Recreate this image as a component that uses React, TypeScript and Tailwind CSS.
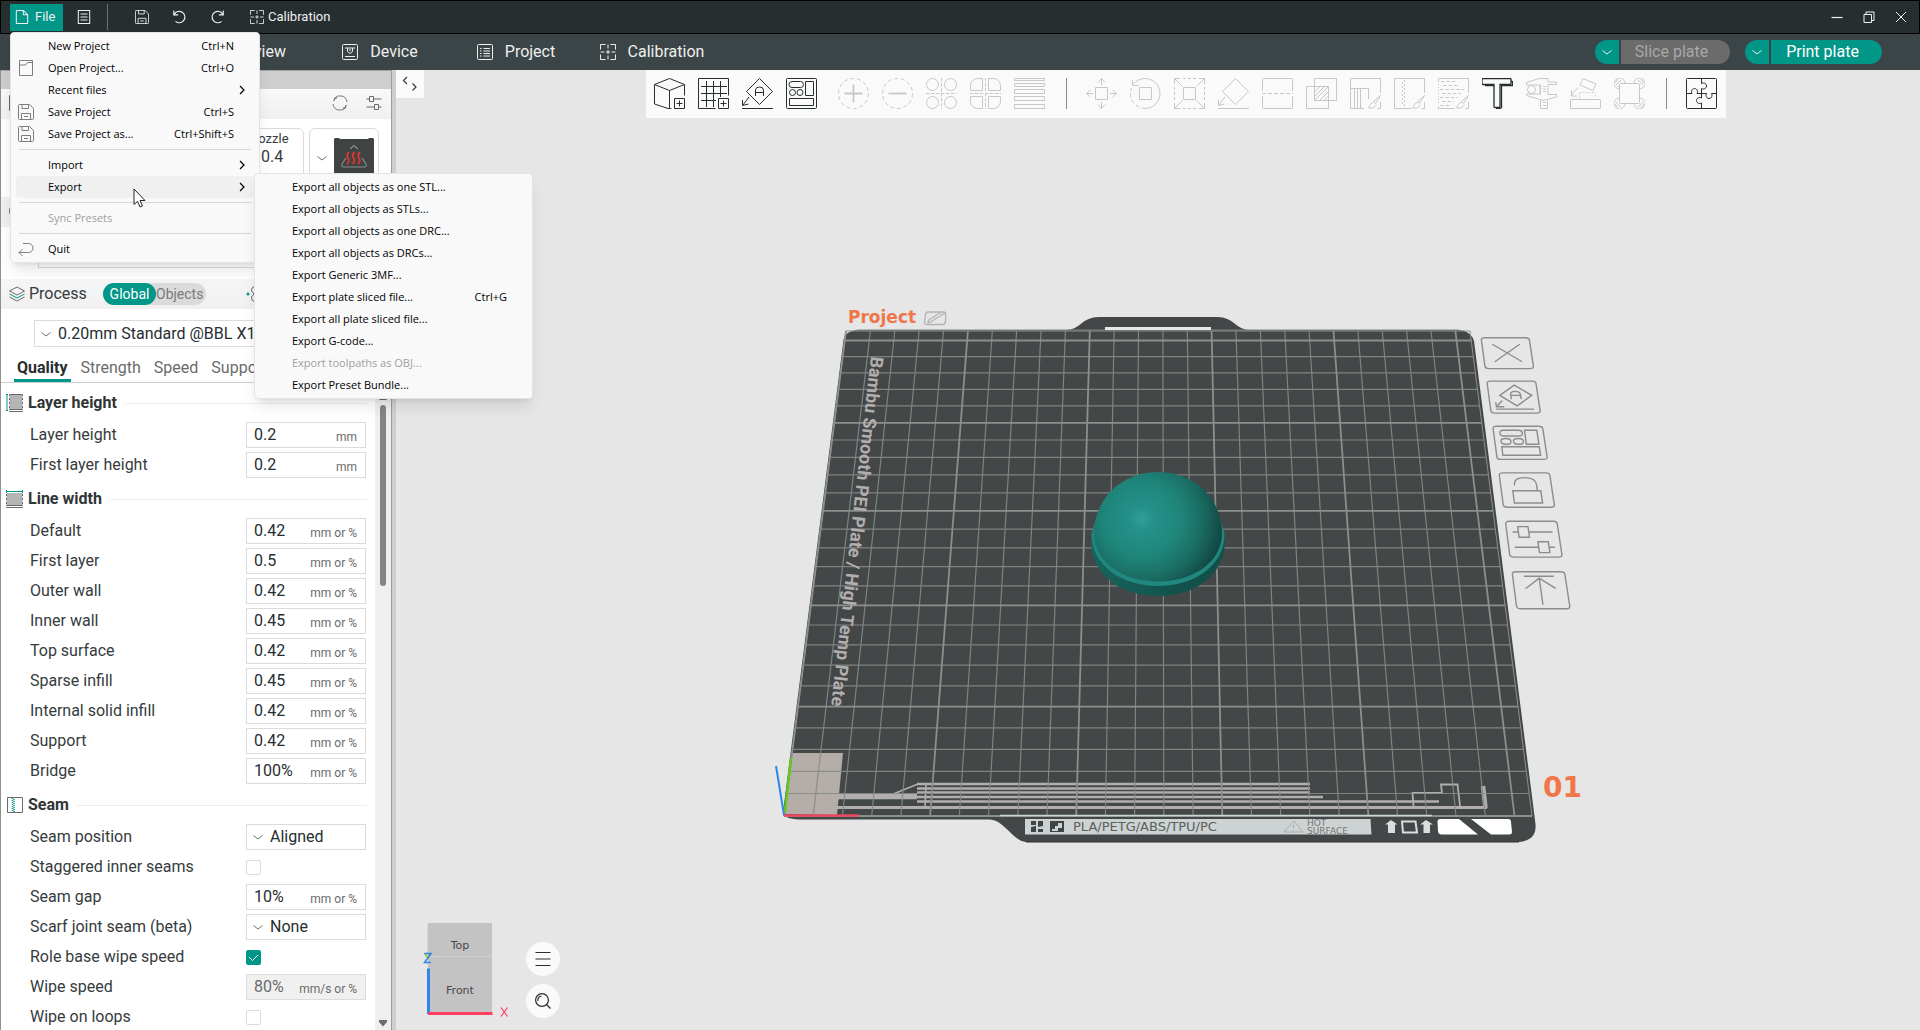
import React from "react";

type Kids = { children?: React.ReactNode };

/* ---------- plate projection ---------- */

const PLATE = 256;

function project(u: number, v: number): [number, number] {
  const w0 = 748;
  const w1 = 624;
  const w = 1 / (1 / w0 + (v / PLATE) * (1 / w1 - 1 / w0));
  const x = 1158 + ((u - PLATE / 2) / PLATE) * w;
  const y = 816 - ((w0 - w) * 485) / (w0 - w1);
  return [x, y];
}

function point(u: number, v: number): string {
  const [x, y] = project(u, v);
  return x.toFixed(1) + " " + y.toFixed(1);
}

/* Projects a path drawn in a 20x20 box whose top-left corner lies at (u, v) on the plate plane. */
function onPlane(d: string, u: number, v: number): string {
  return d.replace(/(-?[\d.]+),(-?[\d.]+)/g, (_m, a, b) =>
    point(u + Number(a) * 0.98, v - Number(b) * 0.96)
  );
}

const FRAME =
  "M1.5,0 L18.5,0 Q20,0 20,1.5 L20,18.5 Q20,20 18.5,20 L1.5,20 Q0,20 0,18.5 L0,1.5 Q0,0 1.5,0Z";

const PLATE_ACTIONS: string[] = [
  "M4.5,4.5 L15.5,15.5 M15.5,4.5 L4.5,15.5",
  "M11,2.5 L17.5,9 L11,15.5 L4.5,9Z M2.5,17.5 L17.5,17.5 M5,12.5 L2.5,16 M2.5,13.5 L2.5,16 L5.5,16 M9,11 L9,8.5 Q9,6.5 11,6.5 Q13,6.5 13,8.5 L13,11 M9,9 L13,9",
  "M4,2.5 L10,2.5 Q11.5,2.5 11.5,4.2 Q11.5,6 10,6 L4,6 Q2.5,6 2.5,4.2 Q2.5,2.5 4,2.5Z M12.5,2.5 L17.5,2.5 L17.5,11 L12.5,11Z M4.5,7.5 Q6.5,7.5 6.5,9.2 Q6.5,11 4.5,11 Q2.5,11 2.5,9.2 Q2.5,7.5 4.5,7.5Z M9.5,7.5 Q11.5,7.5 11.5,9.2 Q11.5,11 9.5,11 Q7.5,11 7.5,9.2 Q7.5,7.5 9.5,7.5Z M2.5,12.5 L17.5,12.5 L17.5,17.5 L2.5,17.5Z",
  "M4.5,10.5 L15.5,10.5 L15.5,17.5 L4.5,17.5Z M5.5,7 Q5.5,2.8 10,2.8 Q14.2,2.8 14.2,7 L14.2,10.5",
  "M2.5,6 L4.5,6 M8.5,6 L17.5,6 M4.5,3 L8.5,3 L8.5,9 L4.5,9Z M2.5,14.5 L11.5,14.5 M15.5,14.5 L17.5,14.5 M11.5,11.5 L15.5,11.5 L15.5,17.5 L11.5,17.5Z",
  "M4.5,2.5 L15.5,2.5 M10,3.5 L10,17.5 M4.5,9 L10,3.5 L15.5,9",
];

function Plate() {
  const minor: string[] = [];
  const major: string[] = [];
  for (let i = 0; i <= 25; i++) {
    const across = "M" + point(0, i * 10) + "L" + point(PLATE, i * 10);
    const along = "M" + point(i * 10, 0) + "L" + point(i * 10, PLATE);
    (i % 5 === 0 ? major : minor).push(across, along);
  }
  const rim =
    "M" + point(0, 0) + "L" + point(PLATE, 0) + "L" + point(PLATE, PLATE) + "L" + point(0, PLATE) + "Z";
  return (
    <svg
      className="absolute inset-0 size-full"
      viewBox="396 70 1524 960"
      preserveAspectRatio="xMidYMid meet"
      fill="none"
      role="img"
      aria-label="Build plate with a dome model"
    >
      <defs>
        <radialGradient id="dome" gradientUnits="userSpaceOnUse" cx="1142" cy="519" r="92">
          <stop offset="0" stopColor="#31a095" />
          <stop offset="0.14" stopColor="#23918a" />
          <stop offset="0.42" stopColor="#1f857a" />
          <stop offset="0.66" stopColor="#1a6b62" />
          <stop offset="0.88" stopColor="#124843" />
        </radialGradient>
        <linearGradient id="skirt" x1="0" x2="1" y1="0" y2="0">
          <stop offset="0" stopColor="#17655d" />
          <stop offset="0.7" stopColor="#12504a" />
          <stop offset="1" stopColor="#154f49" />
        </linearGradient>
      </defs>

      <path
        d="M857 330H1066C1080 330 1082 317 1099 317H1217C1234 317 1236 330 1250 330H1459Q1471 331 1474 341L1535.500 824Q1537 840 1519 842H1026C1014 842 1004 820 990 819.500H799Q784 819 783 812L843.500 340Q845 331 857 330Z"
        fill="#444747"
      />
      <path d="M1026 842H1519" stroke="#2f3333" />
      <path d="M857 330H1459" stroke="#7d8484" />
      <path d="M1105 328.500H1211" stroke="#e8e8e8" strokeWidth="3" />
      <path d="M784 814L791 753H843L837 815Z" fill="#b5aea8" />

      <g stroke="#b2aeae">
        <path d="M917 784H1310M917 788.500H1310M917 792.500H1310M917 797H1323M917 801.500H1439" strokeWidth="2.500" />
        <path d="M838 796.500H917" strokeWidth="5.500" />
        <path d="M837 807.500H1487" strokeWidth="2.800" />
        <path d="M892 794.500L918 784M926 784L925 807" strokeWidth="1.600" />
        <path d="M1413.500 806L1412.500 793H1442L1441 784.500H1457.500L1460 806" strokeWidth="1.800" />
        <path d="M1483 786L1485.500 808" strokeWidth="4.500" />
      </g>

      <path d={minor.join("")} stroke="#858b86" strokeWidth="1.200" opacity="0.9" />
      <path d={major.join("")} stroke="#8a908a" strokeWidth="1.800" />
      <path d={rim} stroke="#8b918c" strokeWidth="1" />
      <path d="M1000 815.500H1432" stroke="#cdd4d4" strokeWidth="1.500" />

      <text
        x="871"
        y="356"
        transform="rotate(96.500 871 356)"
        fill="#b2aeae"
        fontSize="18"
        fontFamily="Roboto, sans-serif"
        fontWeight="700"
      >
        Bambu Smooth PEI Plate / High Temp Plate
      </text>

      <path d="M784 815L776 766" stroke="#2f86ea" strokeWidth="2" />
      <path d="M785 812L791 758" stroke="#62c91c" strokeWidth="2.500" />
      <path d="M784 815.500H859" stroke="#ea4860" strokeWidth="2.500" />

      <path d="M1025 819H1370.500L1371.500 834.500H1025Z" fill="#cdd2d2" />
      <g fill="#3f4545">
        <path d="M1031 821h5v4h-5zM1038 821h5v5l-5 1zM1031 827l5-1v6h-5zM1038 829h5v3h-5z" />
        <path d="M1050 821h14v11h-14zM1058 823v3h-3v3h-3v2h6v-3h4v-5z" fillRule="evenodd" />
      </g>
      <text x="1073" y="831" fill="#596060" fontSize="13" fontFamily="'DejaVu Sans', sans-serif">
        PLA/PETG/ABS/TPU/PC
      </text>
      <path d="M1284 832L1294 821L1303 832ZM1293.500 825v3M1293.500 829.500v1" stroke="#a9aeae" />
      <text fill="#737979" fontSize="9" fontFamily="'DejaVu Sans', sans-serif">
        <tspan x="1307" y="826">HOT</tspan>
        <tspan x="1307" y="834">SURFACE</tspan>
      </text>
      <path d="M1385 824.500L1391 820L1397.500 824.500H1395V833H1388V824.500ZM1420 824.500L1426 820L1433 824.500H1430V833H1423.500V824.500Z" fill="#d9dddd" />
      <path d="M1402 821.500H1415.500L1417 832.500H1403Z" stroke="#d9dddd" strokeWidth="2" />
      <path d="M1440 819H1459L1478 834.500H1441Q1438 834 1438 831L1437.500 821Q1438 819 1440 819ZM1471 819H1508Q1511 819 1511 822L1512 832Q1512 834.500 1509 834.500H1491Z" fill="#fff" />

      <path d="M1091.500 534V549C1096 577 1122 596 1158 596C1194 596 1220 577 1224.500 549V534Z" fill="url(#skirt)" />
      <path d="M1091.500 534C1091.500 565 1121 586 1158 586C1195 586 1224.500 565 1224.500 534L1219 515H1097Z" fill="#20887e" />
      <path d="M1094 534C1094 498 1122 472 1158 472C1194 472 1222 498 1222 534C1222 561 1194 581.500 1158 581.500C1122 581.500 1094 561 1094 534Z" fill="url(#dome)" />

      <text x="848" y="323" fill="#f0764a" fontSize="17" fontWeight="700" fontFamily="'DejaVu Sans', sans-serif">
        Project
      </text>
      <path d="M928 312H943.500Q946 312 945.800 314.500L945.500 322Q945 324.500 942.500 324.500H927Q924 324.500 924.500 322L925.500 314.500Q926 312 928 312ZM929.500 322.500L945 313M928.500 320L941.500 312M928.500 320L928 322.500H929.500" stroke="#b3b3b3" strokeWidth="1.300" />
      <text x="1543" y="797" fill="#f0764a" fontSize="28" fontWeight="700" fontFamily="'DejaVu Sans', sans-serif">
        01
      </text>

      {PLATE_ACTIONS.map((d, i) => (
        <path
          key={i}
          d={onPlane(FRAME + d, 260.2, 251.8 - i * 26.88)}
          stroke="#8c8c8c"
          strokeWidth="1.400"
          strokeLinecap="round"
        />
      ))}
    </svg>
  );
}

/* ---------- icons ---------- */

function Ico({ size = "size-4", box = 16, label, children }: Kids & { size?: string; box?: number; label?: string }) {
  return (
    <svg
      className={"shrink-0 " + size}
      viewBox={"0 0 " + box + " " + box}
      fill="none"
      stroke="currentColor"
      aria-hidden={label ? undefined : true}
      aria-label={label}
    >
      {children}
    </svg>
  );
}

const SavePath = () => (
  <path d="M.5 1.500a1 1 0 0 1 1-1h10l4 4v10a1 1 0 0 1-1 1h-13a1 1 0 0 1-1-1zM4 .5v4h6.500v-4M3.500 15.500v-6h9v6M6 12.500h4" />
);
const CrossFrame = () => (
  <path d="M.5 5.500v-5h5M10.500.5h5v5M15.500 10.500v5h-5M5.500 15.500h-5v-5M8 .5v4M8 11.500v4M.5 8h4M11.500 8h4M6 8h4M8 6v4" />
);
const Chevron = ({ size = "size-3" }: { size?: string }) => (
  <Ico size={size} box={12}>
    <path d="M1.500 4.500L6 8l4.500-3.500" />
  </Ico>
);
const ChevronRight = () => (
  <Ico size="size-3" box={12}>
    <path d="M4 2l4 4-4 4" strokeWidth="1.200" />
  </Ico>
);
const Sliders = () => (
  <path d="M.5 4h3M7.500 4h8M3.500 1.500h4v5h-4zM.5 12h8M12.500 12h3M8.500 9.500h4v5h-4z" />
);

const brush = "M30.500 17.500l-7 6 2 2zM23.500 24.500c-3 0-3 3-5 5.500 3 .5 7 0 7.500-3.500";

type Tool = { name: string; dark?: boolean; d?: string; extra?: React.ReactNode };

const TOOLS: Tool[] = [
  { name: "Add", dark: true, d: "M15.500 31L.5 26V6.500L15.500.5l15 6v11M.5 6.500l15 6 15-6M15.500 12.500V31l2-.5M20.500 20.500h10v10h-10zM25.500 22.500v6M22.500 25.500h6" },
  { name: "Add plate", dark: true, d: "M17.500 30.500H.5V.5h30v17M20.500 20.500h10v10h-10zM25.500 22.500v6M22.500 25.500h6M8.500 3v26M15.500 3v26M22.500 3v16M3 8.500h26M3 15.500h26M3 22.500h15" },
  { name: "Auto orient", dark: true, d: "M17.500.5l13 13-13 13-13-13zM0 30.500h31M7 19l-6 8M.5 22v5.500l6-1.500M13.500 18v-6q0-3 4-3t4 3v6M13.500 14.500h8" },
  { name: "Arrange", dark: true, d: "M1.500.5h28a1 1 0 0 1 1 1v28a1 1 0 0 1-1 1h-28a1 1 0 0 1-1-1v-28a1 1 0 0 1 1-1zM6 3.500h8.500a3 3 0 0 1 0 6H6a3 3 0 0 1 0-6zM19.500 3.500h8v14h-8zM3.500 20.500h24v7h-24zM9.500 14.500a3 3 0 1 1-6 0 3 3 0 0 1 6 0zM17 14.500a3 3 0 1 1-6 0 3 3 0 0 1 6 0z" },
  { name: "Add instance", extra: <><circle cx="15.500" cy="15.500" r="15" strokeDasharray="4 2.700" /><path d="M15.500 6.500v18M6.500 15.500h18" strokeWidth="1.800" /></> },
  { name: "Remove instance", extra: <><circle cx="15.500" cy="15.500" r="15" strokeDasharray="4 2.700" /><path d="M6.500 15.500h18" strokeWidth="1.800" /></> },
  { name: "Split to objects", extra: <><circle cx="6.500" cy="6.500" r="6" /><circle cx="24.500" cy="6.500" r="6" /><circle cx="6.500" cy="24.500" r="6" /><circle cx="24.500" cy="24.500" r="6" /><path d="M15.500 0v31M0 15.500h31" strokeDasharray="3.500 1.500" /></> },
  { name: "Split to parts", extra: <><path d="M12.500.5v12H.5v-5a7 7 0 0 1 7-7zM18.500.5v12h12v-5a7 7 0 0 0-7-7zM12.500 30.500v-12H.5v5a7 7 0 0 0 7 7zM18.500 30.500v-12h12v5a7 7 0 0 1-7 7z" /><path d="M15.500 0v31M0 15.500h31" strokeDasharray="3.500 1.500" /></> },
  { name: "Variable layer height", d: "M.5.5h30v2H.5zM.5 5.500h30v3H.5zM.5 11.500h30v4H.5zM.5 18.500h30v4H.5zM.5 26.500h30v4H.5z" },
  { name: "|" },
  { name: "Move", d: "M9.500 9.500h12v12h-12zM15.500 7V1M12 4.500l3.500-4 3.500 4M15.500 24v6M12 26.500l3.500 4 3.500-4M7 15.500H1M4.500 12l-4 3.500 4 3.500M24 15.500h6M26.500 12l4 3.500-4 3.500" },
  { name: "Rotate", extra: <><path d="M9.500 9.500h12v12h-12zM3 6.500A15 15 0 1 1 15.500 30.500M2.500 1.500v6h6" /><path d="M15.500 30.500A15 15 0 0 1 1.500 10" strokeDasharray="4 2.500" /></> },
  { name: "Scale", extra: <><path d="M9.500 9.500h12v12h-12zM8.500 8.500L1 1M22.500 8.500L30 1M8.500 22.500L1 30M22.500 22.500L30 30M.5 6V.5H6M25 .5h5.500V6M30.500 25v5.500H25M6 30.500H.5V25" /><path d="M9 .5h13M9 30.500h13M.5 9v13M30.500 9v13" strokeDasharray="3 2" /></> },
  { name: "Lay on face", d: "M17.500.5l13 13-13 13-13-13zM0 30.500h31M7 19l-6 8M.5 22v5.500l6-1.500" },
  { name: "Cut", extra: <><path d="M.5 13V1.500a1 1 0 0 1 1-1h28a1 1 0 0 1 1 1V13M.5 18v11.500a1 1 0 0 0 1 1h28a1 1 0 0 0 1-1V18" /><path d="M0 15.500h31" strokeDasharray="4 2" /></> },
  { name: "Mesh boolean", d: "M9.500.5h21v22h-22v-22zM.5 8.500h22v22H.5zM8.500 14l5.500-5.500M8.500 18.500l10-10M9 22l13-13M13.500 22.500l9-9M18 22.500l4.500-4.500" },
  { name: "Paint supports", d: "M.5 30.500V.5h30V15M.5 10.500h18V21M4.500 10.500v20M7.500 10.500v20M10.500 10.500v20M0 30.500h14M30.500 24v6.500h-3" + brush },
  { name: "Paint seam", extra: <><path d={"M17 30.500H.5V.5h30V15M30.500 24v6.500h-3" + brush} /><path d="M10.500 2v27M8.500 4v24" strokeDasharray="2 2" /></> },
  { name: "Paint fuzzy skin", extra: <><path d={"M.5 3V.5h30V15M30.500 24v6.500h-3M.5 28v2.500h16" + brush} /><path d="M.5 3v24" strokeDasharray="1 2" /><path d="M3 3.500h14M5 7.500h16M2 11.500h24M4 15.500h19M2 19.500h18M4 23.500h12M2 27.500h10" strokeDasharray="3.500 2" /></> },
  { name: "Text shape", dark: true, extra: <><path d="M1 .5h27q1 0 1 1v4q0 1-1 1H18v22q0 1-1 1h-4q-1 0-1-1v-22H1q-1 0-1-1v-4q0-1 1-1z" strokeWidth="1.300" /><path d="M3 7.500h9M29 3l1.500.5v4H19.500v22l-1.500 1h-4" strokeWidth="1.300" /></> },
  { name: "Measure", d: "M.5 4.500L13 .5h9v3.500h8.500v2.500H22v10h8.500v2.500L17 22.500 .5 17.500v-1.500H14v-9H.5zM9.500 11.500a4 4 0 1 1-8 0 4 4 0 0 1 8 0zM14.500 22.500v8h7v-8M14.500 6.500v10M17 8.500h3M17 11h3M17 13.500h3M17 24.500h3M17 27.500h3" },
  { name: "Assembly", extra: <><path d="M1 21.500h29q.5 0 .5.500v8q0 .5-.5.500H1q-.5 0-.5-.500v-8q0-.500.5-.500zM13 .5l13 5.500-3 6.500-13-5.500zM8 9.500l-7 8M1.500 12v6h5.500" /><path d="M9.500 20v-5.500h16V20" strokeDasharray="1.500 1.500" /></> },
  { name: "Brim ears", d: "M6.500 5.500h18q1 0 1 1v18q0 1-1 1h-18q-1 0-1-1v-18q0-1 1-1zM5.500 11A5.500 5.500 0 1 1 11 5.500M20 5.500A5.500 5.500 0 1 1 25.500 11M25.500 20A5.500 5.500 0 1 1 20 25.500M11 25.500A5.500 5.500 0 1 1 5.500 20M2 7l5-5M4 9l1.500-1.500M29 7l-5-5M2 24l5 5M29 24l-5 5M1 5l3-3.500M30 5l-3-3.500M1 26l3 3.500M30 26l-3 3.500" },
  { name: "|" },
  { name: "Assembly view", dark: true, d: "M1.500.5h28a1 1 0 0 1 1 1v28a1 1 0 0 1-1 1h-28a1 1 0 0 1-1-1v-28a1 1 0 0 1 1-1zM15.500.5V5.500c1.500-1 5-.5 5 2.500s-3.500 3.500-5 2.500v9.500c-1.500-1-5-.5-5 2.500s3.500 3.500 5 2.500v5.500M.5 15.500H6c-1-1.500-.5-5 2.500-5s3.500 3.500 2.500 5h9.500c-1 1.500-.5 5 2.500 5s3.500-3.500 2.500-5h5" },
];

/* ---------- chrome ---------- */

function TitleBar() {
  return (
    <header className="flex h-[34px] shrink-0 items-center border border-black bg-[#262e30] pr-3 text-[13px] text-[#efefef]">
      <button className="ml-[9px] flex h-[27px] w-[53px] items-center gap-1.5 bg-[#009688] pl-[5px]">
        <Ico size="size-3.5">
          <path d="M1.500 1.500a1 1 0 0 1 1-1h7l5 5v9a1 1 0 0 1-1 1h-11a1 1 0 0 1-1-1zM9.500.5v5h5" strokeWidth="1.200" />
        </Ico>
        File
      </button>
      <button className="ml-3.5" aria-label="Recent list">
        <Ico size="size-3.5"><path d="M1.500.5h13v15h-13zM4 4.500h8M4 8h8M4 11.500h8" strokeWidth="1.200" /></Ico>
      </button>
      <span className="ml-4 h-[26px] w-px bg-[#6b7376]" />
      <button className="ml-[27px]" aria-label="Save"><Ico size="size-3.5"><SavePath /></Ico></button>
      <button className="ml-[23px]" aria-label="Undo">
        <Ico size="size-3.5"><path d="M2 .5v5h5M2.500 5A6.500 6.500 0 1 1 4 13" strokeWidth="1.300" /></Ico>
      </button>
      <button className="ml-[25px]" aria-label="Redo">
        <Ico size="size-3.5"><path d="M14 .5v5H9M13.500 5A6.500 6.500 0 1 0 12 13" strokeWidth="1.300" /></Ico>
      </button>
      <button className="ml-[25px] flex items-center gap-1">
        <Ico size="size-3.5"><CrossFrame /></Ico>
        Calibration
      </button>
      <div className="ml-auto flex items-center gap-5">
        <button aria-label="Minimize"><Ico size="size-3" box={12}><path d="M.5 6.500h11" strokeWidth="1.200" /></Ico></button>
        <button aria-label="Restore"><Ico size="size-3" box={12}><path d="M1 3.500h7.500v8H1zM3 3V1h8v8.500H9" /></Ico></button>
        <button aria-label="Close"><Ico size="size-3" box={12}><path d="M1 1l10 10M11 1L1 11" /></Ico></button>
      </div>
    </header>
  );
}

function Tab({ icon, children }: Kids & { icon: React.ReactNode }) {
  return (
    <button className="flex h-full w-[136px] items-center justify-center gap-3">
      {icon}
      {children}
    </button>
  );
}

function TabBar() {
  return (
    <nav className="flex h-9 shrink-0 items-center bg-[#3b4446] pl-44 pr-[38px] text-base text-[#efefef]">
      <Tab icon={<Ico><path d="M1 1h14v14H1z" /></Ico>}>Preview</Tab>
      <Tab icon={<Ico><path d="M1.500.5h13a1 1 0 0 1 1 1v13a1 1 0 0 1-1 1h-13a1 1 0 0 1-1-1v-13a1 1 0 0 1 1-1zM3 4h10M5.500 4v3.500l2.500 2 2.500-2V4M8 5v2M3 12.500h10" /></Ico>}>Device</Tab>
      <Tab icon={<Ico><path d="M1.500.5h13a1 1 0 0 1 1 1v13a1 1 0 0 1-1 1h-13a1 1 0 0 1-1-1v-13a1 1 0 0 1 1-1zM3 4.500h1.500M3 7h1.500M3 9.500h1.500M3 12h1.500M6.500 4.500H13M6.500 7H13M6.500 9.500H13M6.500 12H13" /></Ico>}>Project</Tab>
      <Tab icon={<Ico><CrossFrame /></Ico>}>Calibration</Tab>
      <div className="ml-auto flex gap-[15px]">
        <div className="flex h-6 gap-0.5">
          <button aria-label="Slice options" className="flex w-6 items-center justify-center rounded-l-full bg-[#009688]"><Chevron /></button>
          <button disabled className="w-[109px] rounded-r-full bg-[#6b6b6b] pr-2 text-[#a8a8a8]">Slice plate</button>
        </div>
        <div className="flex h-6 gap-0.5">
          <button aria-label="Print options" className="flex w-6 items-center justify-center rounded-l-full bg-[#009688]"><Chevron /></button>
          <button className="w-[111px] rounded-r-full bg-[#009688] pr-2 text-white">Print plate</button>
        </div>
      </div>
    </nav>
  );
}

/* ---------- sidebar ---------- */

function SectionTitle({ icon, children }: Kids & { icon: React.ReactNode }) {
  return (
    <div className="flex h-9 items-center gap-1 pl-[5px] pr-2 pt-0.5">
      {icon}
      <h2 className="pr-1 text-base font-bold text-[#303536]">{children}</h2>
      <span className="h-px flex-1 bg-[#eeeeee]" />
    </div>
  );
}

function Row({ id, label, children }: Kids & { id: string; label: string }) {
  return (
    <div className="flex h-[30px] items-center pl-[29px] pr-[9px]">
      <label htmlFor={id} className="flex-1 text-[#363b3d]">{label}</label>
      <div className="flex w-[120px]">{children}</div>
    </div>
  );
}

function NumberRow({ id, label, value, unit, disabled }: { id: string; label: string; value: string; unit: string; disabled?: boolean }) {
  return (
    <Row id={id} label={label}>
      <div className={"flex h-[26px] w-full items-center border border-[#dbdbdb] pl-[7px] pr-2 " + (disabled ? "bg-[#f0f0f0] text-[#6b6b6b]" : "text-[#262e30]")}>
        <input id={id} defaultValue={value} disabled={disabled} className="w-0 flex-1 bg-transparent outline-none" />
        <span className="pt-1 text-xs text-[#6b6b6b]">{unit}</span>
      </div>
    </Row>
  );
}

function SelectRow({ id, label, value }: { id: string; label: string; value: string }) {
  return (
    <Row id={id} label={label}>
      <div className="flex h-[26px] w-full items-center gap-1.5 border border-[#dbdbdb] pl-[5px] text-[#262e30]">
        <span className="text-[#6b6b6b]"><Chevron /></span>
        <select id={id} className="flex-1 appearance-none bg-transparent outline-none">
          <option>{value}</option>
        </select>
      </div>
    </Row>
  );
}

function CheckRow({ id, label, checked }: { id: string; label: string; checked?: boolean }) {
  return (
    <Row id={id} label={label}>
      <span className="grid">
        <input
          id={id}
          type="checkbox"
          defaultChecked={checked}
          className="col-start-1 row-start-1 size-[15px] appearance-none rounded-xs border border-[#dbdbdb] checked:border-[#009688] checked:bg-[#009688]"
        />
        {checked && (
          <svg className="pointer-events-none col-start-1 row-start-1 size-[15px]" viewBox="0 0 15 15" fill="none" stroke="#fff">
            <path d="M3 7l3.500 3.500L12 5" />
          </svg>
        )}
      </span>
    </Row>
  );
}

const LINE_WIDTHS: [string, string][] = [
  ["Default", "0.42"],
  ["First layer", "0.5"],
  ["Outer wall", "0.42"],
  ["Inner wall", "0.45"],
  ["Top surface", "0.42"],
  ["Sparse infill", "0.45"],
  ["Internal solid infill", "0.42"],
  ["Support", "0.42"],
  ["Bridge", "100%"],
];

const Stack = () => (
  <path d="M3.500 4h13v2h-13zM3.500 8h13v2h-13zM3.500 12h13v2h-13zM3 15.500h14M3 17.500h14" stroke="#6b6b6b" />
);

function Sidebar() {
  return (
    <aside className="flex w-[396px] shrink-0 flex-col border-l border-[#8f8f8f] bg-white text-base">
      <div className="flex min-h-0 flex-1 border-r-4 border-[#cecece]">
        <div className="flex min-w-0 flex-1 flex-col border-r border-[#9c9c9c]">
          <div className="h-[19px] shrink-0 border-t border-[#a3a3a3] bg-[#cecece]" />
          <div className="flex h-[30px] shrink-0 items-center gap-[18px] bg-linear-to-b from-[#f9f9f9] to-[#f0f0f0] pr-[9px] pb-0.5 pl-2 text-[#6b6b6b]">
            <Ico><path d="M.5.500h15v15H.5z" /></Ico>
            <button className="ml-auto" aria-label="Sync printer">
              <Ico><path d="M1 9A7 7 0 0 0 13.500 12.500M15 7A7 7 0 0 0 2.500 3.500M1.500 6A7 7 0 0 1 5 1.700M14.500 10A7 7 0 0 1 11 14.300M13.500 10.500v2.500h-2.500M2.500 5.500V3H5" strokeWidth=".9" /></Ico>
            </button>
            <button aria-label="Printer settings"><Ico><Sliders /></Ico></button>
          </div>
          <div className="flex h-[78px] shrink-0 justify-end gap-[5px] overflow-hidden pr-3 pt-[9px]">
            <div className="flex h-20 w-[88px] flex-col rounded-md border border-[#dbdbdb] pl-8 text-[#363b3d]">
              <span className="text-[13px] leading-5">Nozzle</span>
              <span className="pl-3 text-base leading-4">0.4</span>
            </div>
            <button className="flex h-20 w-[70px] items-start gap-1.5 rounded-md border border-[#dbdbdb] pl-1.5 pt-[9px] text-[#6b6b6b]" aria-label="Bed type">
              <span className="pt-3.5"><Chevron /></span>
              <svg className="h-[42px] w-10" viewBox="0 0 40 42" fill="none">
                <path d="M0 2V1l1-1h4l1 1h28l1-1h4l1 1v41H0z" fill="#404343" />
                <path d="M12 20l-4 6q-1 3 2 3h20q3 0 2-3l-4-6M16 11l4-3.500 4 3.500" stroke="#8a8a8a" strokeWidth="1.200" />
                <path d="M15 14q-3 3-1 6t-1 6M20.500 14q-3 3-1 6t-1 6M26 14q-3 3-1 6t-1 6" stroke="#e8322f" strokeWidth="1.800" />
              </svg>
            </button>
          </div>
          <div className="h-[30px] shrink-0 bg-[#f0f0f0] pl-2 pt-1.5 text-[#6b6b6b]">
            <Ico><circle cx="8" cy="8" r="7.500" /></Ico>
          </div>
          <div className="h-[52px] shrink-0 pl-[37px]">
            <div className="h-[41px] border-b border-l border-[#dbdbdb]" />
          </div>
          <div className="flex h-[30px] shrink-0 items-center bg-linear-to-b from-[#f6f6f6] to-[#f0f0f0] pb-px pl-2 text-[#363b3d]">
            <Ico>
              <path d="M.5 5L8 1l7.500 4L8 9z" stroke="#6b6b6b" />
              <path d="M.5 8L8 12l7.500-4" stroke="#009688" />
              <path d="M.5 11L8 15l7.500-4" stroke="#6b6b6b" />
            </Ico>
            <span className="w-[72px] pl-1">Process</span>
            <div className="ml-1.5 flex h-[22px] rounded-full bg-[#dbdbdb] text-sm">
              <button className="w-[53px] rounded-full bg-[#009688] text-white">Global</button>
              <button className="w-[50px] pr-1.5 text-[#7a7a7a]">Objects</button>
            </div>
            <span className="ml-10 text-[#6b6b6b]">
              <Ico>
                <circle cx="2" cy="8" r="1.500" fill="#009688" stroke="none" />
                <path d="M8 8q-4-3-2-6t4 0-2 6q4 3 2 6t-4 0 2-6q5-2 7 0t-7 0" />
              </Ico>
            </span>
          </div>
          <div className="shrink-0 pb-[9px] pl-[33px] pr-3 pt-[11px]">
            <div className="flex h-[27px] items-center gap-1.5 border border-[#dbdbdb] pl-[5px] text-[#262e30]">
              <span className="text-[#6b6b6b]"><Chevron /></span>
              <select aria-label="Process preset" className="flex-1 appearance-none bg-transparent outline-none">
                <option>0.20mm Standard @BBL X1C</option>
              </select>
            </div>
          </div>
          <div className="flex h-[27px] shrink-0 gap-[13px] border-b border-[#cecece] pl-[13px] text-[#6b6b6b]">
            <button className="h-[26px] border-b-3 border-[#009688] px-[3px] pb-1 font-bold text-[#262e30]">Quality</button>
            <button className="-ml-[3px] pb-1">Strength</button>
            <button className="pb-1">Speed</button>
            <button className="pb-1">Support</button>
          </div>
          <div className="flex min-h-0 flex-1 overflow-hidden">
            <div className="min-w-0 flex-1 pt-px">
              <SectionTitle icon={<Ico size="size-[18px]" box={18}><Stack /><path d="M3.500.5h13v1.500h-13z" stroke="#6b6b6b" /><path d="M1 .5v16M0 .5h2M0 16.500h2" stroke="#009688" /></Ico>}>
                Layer height
              </SectionTitle>
              <NumberRow id="layer-height" label="Layer height" value="0.2" unit="mm" />
              <NumberRow id="first-layer-height" label="First layer height" value="0.2" unit="mm" />
              <SectionTitle icon={<Ico size="size-[18px]" box={18}><path d="M.5 4h16v2H.5zM.5 8h16v2H.5zM.5 12h16v2H.5zM0 15.500h17M0 17.500h17" stroke="#6b6b6b" /><path d="M.5 1.500h16M.5 0v3M16.500 0v3" stroke="#009688" /></Ico>}>
                Line width
              </SectionTitle>
              {LINE_WIDTHS.map(([label, value]) => (
                <NumberRow key={label} id={label.toLowerCase().replace(/ /g, "-")} label={label} value={value} unit="mm or %" />
              ))}
              <SectionTitle icon={<Ico size="size-[18px]" box={18}><path d="M1.500 1.500h15v15h-15z" stroke="#6b6b6b" /><path d="M6.500 2v14M8 3v13" stroke="#009688" strokeWidth="1.500" strokeDasharray="1 1" /></Ico>}>
                Seam
              </SectionTitle>
              <SelectRow id="seam-position" label="Seam position" value="Aligned" />
              <CheckRow id="staggered" label="Staggered inner seams" />
              <NumberRow id="seam-gap" label="Seam gap" value="10%" unit="mm or %" />
              <SelectRow id="scarf" label="Scarf joint seam (beta)" value="None" />
              <CheckRow id="role-wipe" label="Role base wipe speed" checked />
              <NumberRow id="wipe-speed" label="Wipe speed" value="80%" unit="mm/s or %" disabled />
              <CheckRow id="wipe-loops" label="Wipe on loops" />
            </div>
            <div className="flex w-4 shrink-0 flex-col items-center bg-[#efefef] pb-0.5 text-[#6e6e6e]">
              <svg className="mt-2 size-2.5" viewBox="0 0 10 10" fill="currentColor"><path d="M1 9l4-6 4 6z" /></svg>
              <div className="mt-1 h-[181px] w-1.5 rounded-full bg-[#848484]" />
              <svg className="mt-auto size-2.5" viewBox="0 0 10 10" fill="currentColor"><path d="M1 2h8v2L5 8.500 1 4z" /></svg>
            </div>
          </div>
        </div>
      </div>
    </aside>
  );
}

/* ---------- viewport ---------- */

function Toolbar() {
  return (
    <div className="flex h-12 items-center bg-[#fafafa] pl-px pr-[3px] pb-px">
      {TOOLS.map((t, i) =>
        t.name === "|" ? (
          <span key={i} className="ml-[15px] mr-3 h-[31px] w-px bg-[#8a8a8a]" />
        ) : (
          <button
            key={i}
            aria-label={t.name}
            disabled={!t.dark}
            className={"flex h-full w-11 items-center justify-center " + (t.dark ? "text-[#262e30] " : "text-[#c6c8c8] ") + (i === 3 ? "mr-2" : "")}
          >
            <Ico size="size-[31px]" box={31}>
              {t.d ? <path d={t.d} /> : null}
              {t.extra}
            </Ico>
          </button>
        )
      )}
    </div>
  );
}

function NavCube() {
  return (
    <svg className="h-[110px] w-[90px]" viewBox="420 915 90 110" fill="none" role="img" aria-label="Orientation cube">
      <path d="M428 923H492V1014H428Z" fill="#c3c3c3" />
      <path d="M427.500 926V957" stroke="#d6d6d6" />
      <path d="M428 956.500H492" stroke="#d0d0d0" />
      <path d="M428.500 968.500V1014" stroke="#2f86ea" strokeWidth="3" />
      <path d="M428 1013.500H492.500" stroke="#ff4060" strokeWidth="3" />
      <g fontFamily="'DejaVu Sans', sans-serif" fill="#484848" fontSize="11" textAnchor="middle">
        <text x="460" y="949">Top</text>
        <text x="460" y="994">Front</text>
      </g>
      <path d="M424.500 953.500L428 958L431 953.500" stroke="#8fc93a" strokeWidth="1.500" />
      <path d="M424.500 953.500H431L424.500 962.500H431" stroke="#2f86ea" strokeWidth="1.500" />
      <path d="M501 1007.500L507.500 1016.500M507.500 1007.500L501 1016.500" stroke="#ff4060" strokeWidth="1.200" />
    </svg>
  );
}

function Viewport() {
  return (
    <main className="relative flex min-w-0 flex-1 flex-col overflow-hidden bg-[#e6e6e6]">
      <Plate />
      <div className="relative flex items-start">
        <button aria-label="Collapse sidebar" className="flex h-7 w-7 items-center justify-center bg-[#fafafa] text-[#363b3d]">
          <Ico><path d="M5 1L1.500 4.500 5 8M10.500 7.500L14 11l-3.500 3.500" strokeWidth="1.200" /></Ico>
        </button>
        <div className="flex flex-1 justify-center pl-[28px]">
          <Toolbar />
        </div>
      </div>
      <div className="relative mt-auto flex items-end gap-4 pb-[5px] pl-6">
        <NavCube />
        <div className="flex flex-col gap-2 pb-[7px]">
          <button aria-label="View menu" className="flex size-[34px] items-center justify-center rounded-full bg-[#fafafa] text-[#262e30]">
            <Ico><path d="M.5 1.500h15M.5 8h15M.5 14.500h15" strokeWidth="1.200" /></Ico>
          </button>
          <button aria-label="Zoom" className="flex size-[34px] items-center justify-center rounded-full bg-[#fafafa] text-[#262e30]">
            <Ico><circle cx="7" cy="7" r="6.400" strokeWidth="1.200" /><path d="M11.500 11.500l4 4M3 8a4 4 0 0 1 3.500-5" strokeWidth="1.200" /></Ico>
          </button>
        </div>
      </div>
    </main>
  );
}

/* ---------- menus ---------- */

function Item({ label, keys, icon, more, active, disabled }: { label: string; keys?: string; icon?: React.ReactNode; more?: boolean; active?: boolean; disabled?: boolean }) {
  return (
    <li className="px-[5px]">
      <button
        role="menuitem"
        disabled={disabled}
        className={"flex h-[22px] w-full items-center rounded-sm " + (active ? "bg-[#f0f0f0] " : "") + (disabled ? "text-[#a0a0a0]" : "text-black")}
      >
        <span className="flex w-8 shrink-0 pl-0.5 text-[#7d7d7d]">{icon}</span>
        <span>{label}</span>
        <span className="ml-auto">{keys}</span>
        <span className="flex w-5 shrink-0 pl-0.5">{more && <ChevronRight />}</span>
      </button>
    </li>
  );
}

const Rule = () => <li role="separator" className="mx-2 my-1 h-px bg-[#d7d7d7]" />;

function FileMenu() {
  return (
    <ul role="menu" className="absolute left-2.5 top-8 w-[250px] rounded-sm border border-[#e4e4e4] bg-[#f9f9f9] py-0.5 font-['Open_Sans',sans-serif] text-[11px] shadow-lg">
      <Item label="New Project" keys="Ctrl+N" />
      <Item label="Open Project..." keys="Ctrl+O" icon={<Ico><path d="M1.500.500h13v15h-13zM1.500 5h6l2-2.500h5" /></Ico>} />
      <Item label="Recent files" more />
      <Item label="Save Project" keys="Ctrl+S" icon={<Ico><SavePath /></Ico>} />
      <Item label="Save Project as..." keys="Ctrl+Shift+S" icon={<Ico><SavePath /></Ico>} />
      <Rule />
      <Item label="Import" more />
      <Item label="Export" more active />
      <Rule />
      <Item label="Sync Presets" disabled />
      <Rule />
      <Item label="Quit" icon={<Ico><path d="M5 2.500h5.500a4.500 4.500 0 0 1 0 9H1M4.500 8L1 11.500 4.500 15" /></Ico>} />
    </ul>
  );
}

const EXPORTS: { label: string; keys?: string; disabled?: boolean }[] = [
  { label: "Export all objects as one STL..." },
  { label: "Export all objects as STLs..." },
  { label: "Export all objects as one DRC..." },
  { label: "Export all objects as DRCs..." },
  { label: "Export Generic 3MF..." },
  { label: "Export plate sliced file...", keys: "Ctrl+G" },
  { label: "Export all plate sliced file..." },
  { label: "Export G-code..." },
  { label: "Export toolpaths as OBJ...", disabled: true },
  { label: "Export Preset Bundle..." },
];

function ExportMenu() {
  return (
    <ul role="menu" className="absolute left-[254px] top-[173px] w-[279px] rounded-sm border border-[#e4e4e4] bg-[#f9f9f9] py-0.5 font-['Open_Sans',sans-serif] text-[11px] shadow-lg">
      {EXPORTS.map((e) => (
        <Item key={e.label} {...e} />
      ))}
    </ul>
  );
}

export default function App() {
  return (
    <div className="relative flex h-screen flex-col overflow-hidden bg-[#e6e6e6] font-[Roboto,sans-serif]">
      <TitleBar />
      <TabBar />
      <div className="flex min-h-0 flex-1">
        <Sidebar />
        <Viewport />
      </div>
      <FileMenu />
      <ExportMenu />
      <svg className="pointer-events-none absolute left-[133px] top-[188px] h-5 w-3.5" viewBox="0 0 14 20">
        <path d="M1 1v15.500l3.500-3.200 2.500 5.700 2.500-1-2.500-5.500H12z" fill="#fff" stroke="#222" />
      </svg>
    </div>
  );
}
